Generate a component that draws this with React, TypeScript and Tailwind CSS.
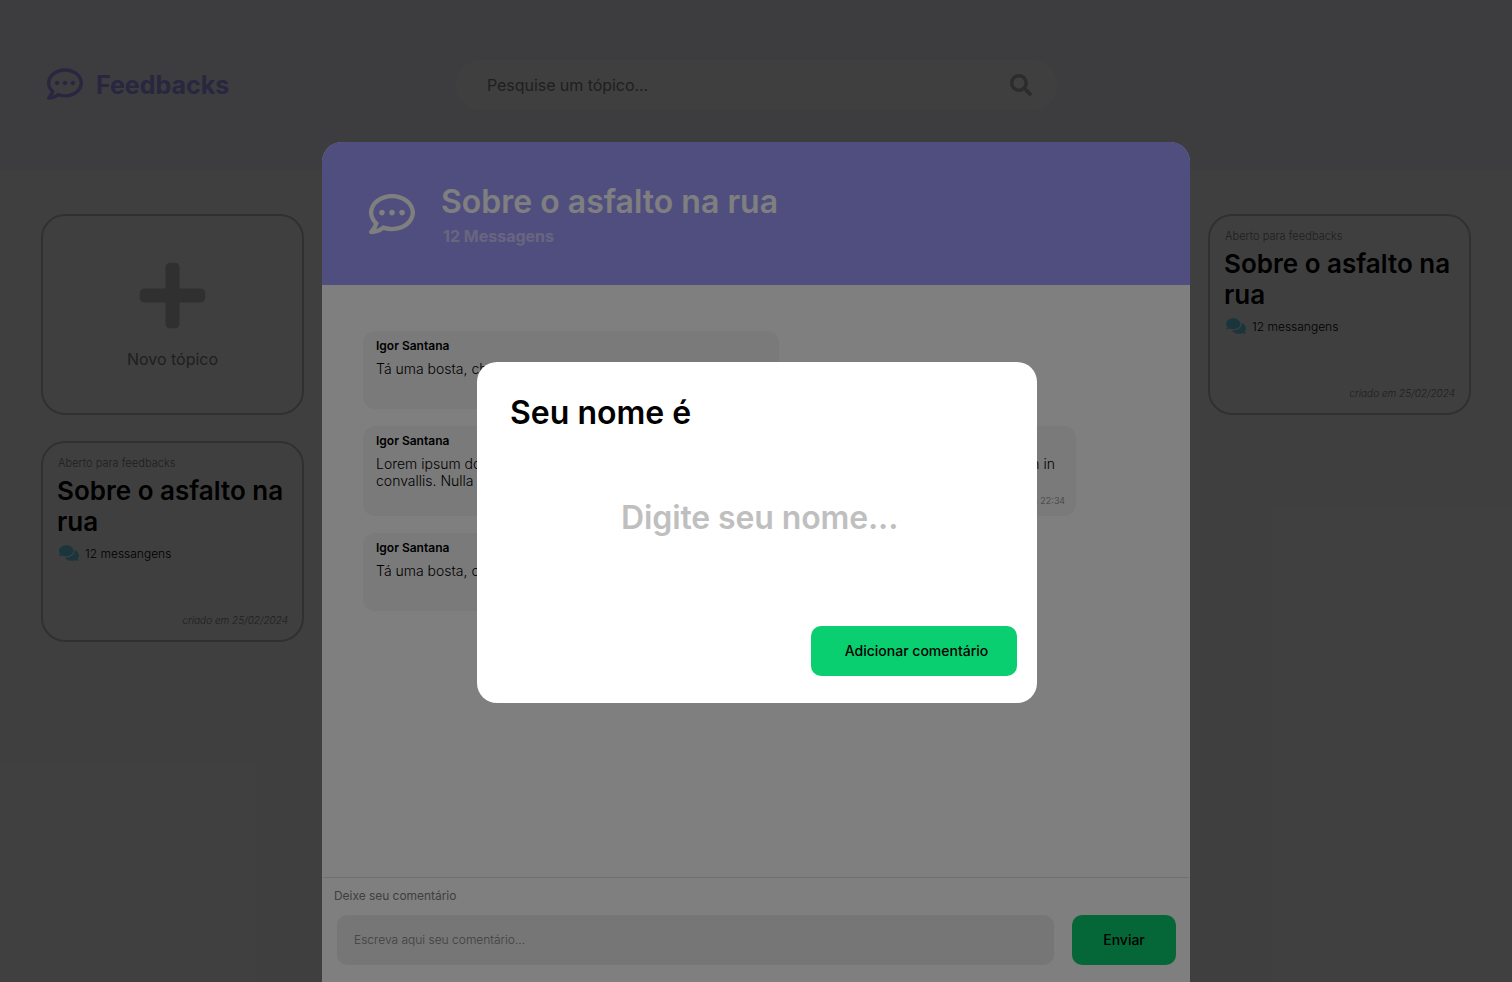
import type { ReactNode } from "react";
import { FaComments, FaPlus, FaRegCommentDots, FaSearch } from "react-icons/fa";

function TopicCard() {
  return (
    <article className="flex h-[201px] w-[263px] flex-col rounded-[24px] border-2 border-[#c0c0c0] pt-[12px] pr-[14px] pl-[14px] whitespace-nowrap">
      <p className="pl-px text-[11px] leading-[16px] font-light tracking-[0.05px] text-[#808080]">Aberto para feedbacks</p>
      <h2 className="mt-[4px] text-[26px] leading-[31px] font-semibold text-black">
        Sobre o asfalto na
        <br />
        rua
      </h2>
      <div className="mt-[7px] flex h-[18px] items-center gap-[6px] pl-[2px]">
        <FaComments className="h-[18px] w-[20px] text-[#68d8f0]" />
        <span className="pt-px text-[12px] font-light text-black">12 messangens</span>
      </div>
      <p className="mt-auto mb-[13px] text-right text-[10px] leading-[14px] font-light text-[#808080] italic">criado em 25/02/2024</p>
    </article>
  );
}

function Comment({ className, children, time }: { className: string; children: ReactNode; time?: string }) {
  return (
    <article className={`flex flex-col rounded-[12px] bg-[#f4f4f4] pt-[7px] pr-[11px] pl-[13px] ${className}`}>
      <h3 className="text-[12px] leading-[16px] font-semibold text-black">Igor Santana</h3>
      <div className="mt-[6px] text-[14px] leading-[17px] font-light text-black">{children}</div>
      {time && <p className="mt-auto mb-[9px] text-right text-[9px] leading-[12px] font-light text-[#808080]">{time}</p>}
    </article>
  );
}

export default function App() {
  return (
    <div className="relative h-[982px] w-[1512px] overflow-hidden bg-white font-['Inter',sans-serif]">
      <header className="flex h-[170px] items-center bg-[#f4f0ff] pl-[47px]">
        <div className="flex w-[409px] items-center gap-[13px] pb-[2px]">
          <FaRegCommentDots className="size-[36px] text-[#a09cff]" />
          <span className="pt-[3px] text-[25px] font-bold text-[#a09cff]">Feedbacks</span>
        </div>
        <div className="flex h-[50px] w-[601px] items-center justify-between rounded-full bg-white pr-[25px] pl-[31px]">
          <span className="text-[16px] font-normal tracking-[-0.05px] text-[#808080]">Pesquise um tópico...</span>
          <FaSearch className="mb-px size-[22px] text-[#b0b0b0]" />
        </div>
      </header>

      <main className="flex justify-between px-[41px] pt-[44px]">
        <div className="flex flex-col gap-[26px]">
          <button className="flex h-[201px] w-[263px] flex-col items-center rounded-[24px] border-2 border-[#c0c0c0] pt-[42px]">
            <FaPlus className="size-[75px] text-[#c0c0c0]" />
            <span className="mt-[14px] text-[16px] leading-[24px] font-normal text-[#808080]">Novo tópico</span>
          </button>
          <TopicCard />
        </div>
        <TopicCard />
      </main>

      <div className="absolute inset-0 flex justify-center bg-black/50 pt-[142px]">
        <section className="flex h-[840px] w-[868px] flex-col overflow-hidden rounded-t-[20px] bg-white">
          <header className="flex h-[143px] shrink-0 items-center bg-[#a09cff] pl-[47px]">
            <FaRegCommentDots className="size-[46px] text-white" />
            <div className="ml-[26px]">
              <h1 className="pt-px text-[32px] leading-[40px] font-semibold text-white">Sobre o asfalto na rua</h1>
              <p className="mt-[4px] pl-[2px] text-[16px] leading-[20px] font-bold text-[#d0ccff]">12 Messagens</p>
            </div>
          </header>
          <div className="flex flex-1 flex-col gap-[17px] pt-[46px] pl-[41px]">
            <Comment className="h-[78px] w-[416px]">Tá uma bosta, cheio de</Comment>
            <Comment className="h-[90px] w-[713px]" time="às 22:34">
              <div className="flex justify-between pr-[10px]">
                <span>Lorem ipsum dolor sit</span>
                <span>Nullam in</span>
              </div>
              <p>convallis. Nulla</p>
            </Comment>
            <Comment className="h-[78px] w-[416px]">Tá uma bosta, cheio de</Comment>
          </div>
          <footer className="mx-px flex h-[105px] shrink-0 flex-col border-t border-[#e0e0e0] pt-[10px] pl-[11px]">
            <p className="text-[12px] leading-[16px] font-normal tracking-[-0.04px] text-[#808080]">Deixe seu comentário</p>
            <div className="mt-[11px] flex gap-[18px] pl-[3px]">
              <div className="flex h-[50px] w-[717px] items-center rounded-[10px] bg-[#ececec] pl-[17px] text-[12px] font-light text-[#808080]">
                Escreva aqui seu comentário...
              </div>
              <button className="h-[50px] w-[104px] rounded-[10px] bg-[#0acf70] pb-[2px] text-[14px] font-medium text-black">Enviar</button>
            </div>
          </footer>
        </section>
      </div>

      <div className="absolute inset-0 bg-black/50 pt-[362px] pl-[477px]">
        <section className="flex h-[341px] w-[560px] flex-col rounded-[20px] bg-white pt-[31px] pr-[20px] pl-[33px]">
          <h2 className="text-[32px] leading-[40px] font-semibold text-black">Seu nome é</h2>
          <p className="mt-[65px] pl-[111px] text-[32px] leading-[40px] font-semibold tracking-[-0.12px] text-[#bfbfbf]">Digite seu nome...</p>
          <button className="mt-[88px] h-[50px] w-[206px] self-end rounded-[10px] bg-[#0acf70] pb-[2px] pl-[5px] text-center text-[14px] font-medium whitespace-nowrap text-black">
            Adicionar comentário
          </button>
        </section>
      </div>
    </div>
  );
}
